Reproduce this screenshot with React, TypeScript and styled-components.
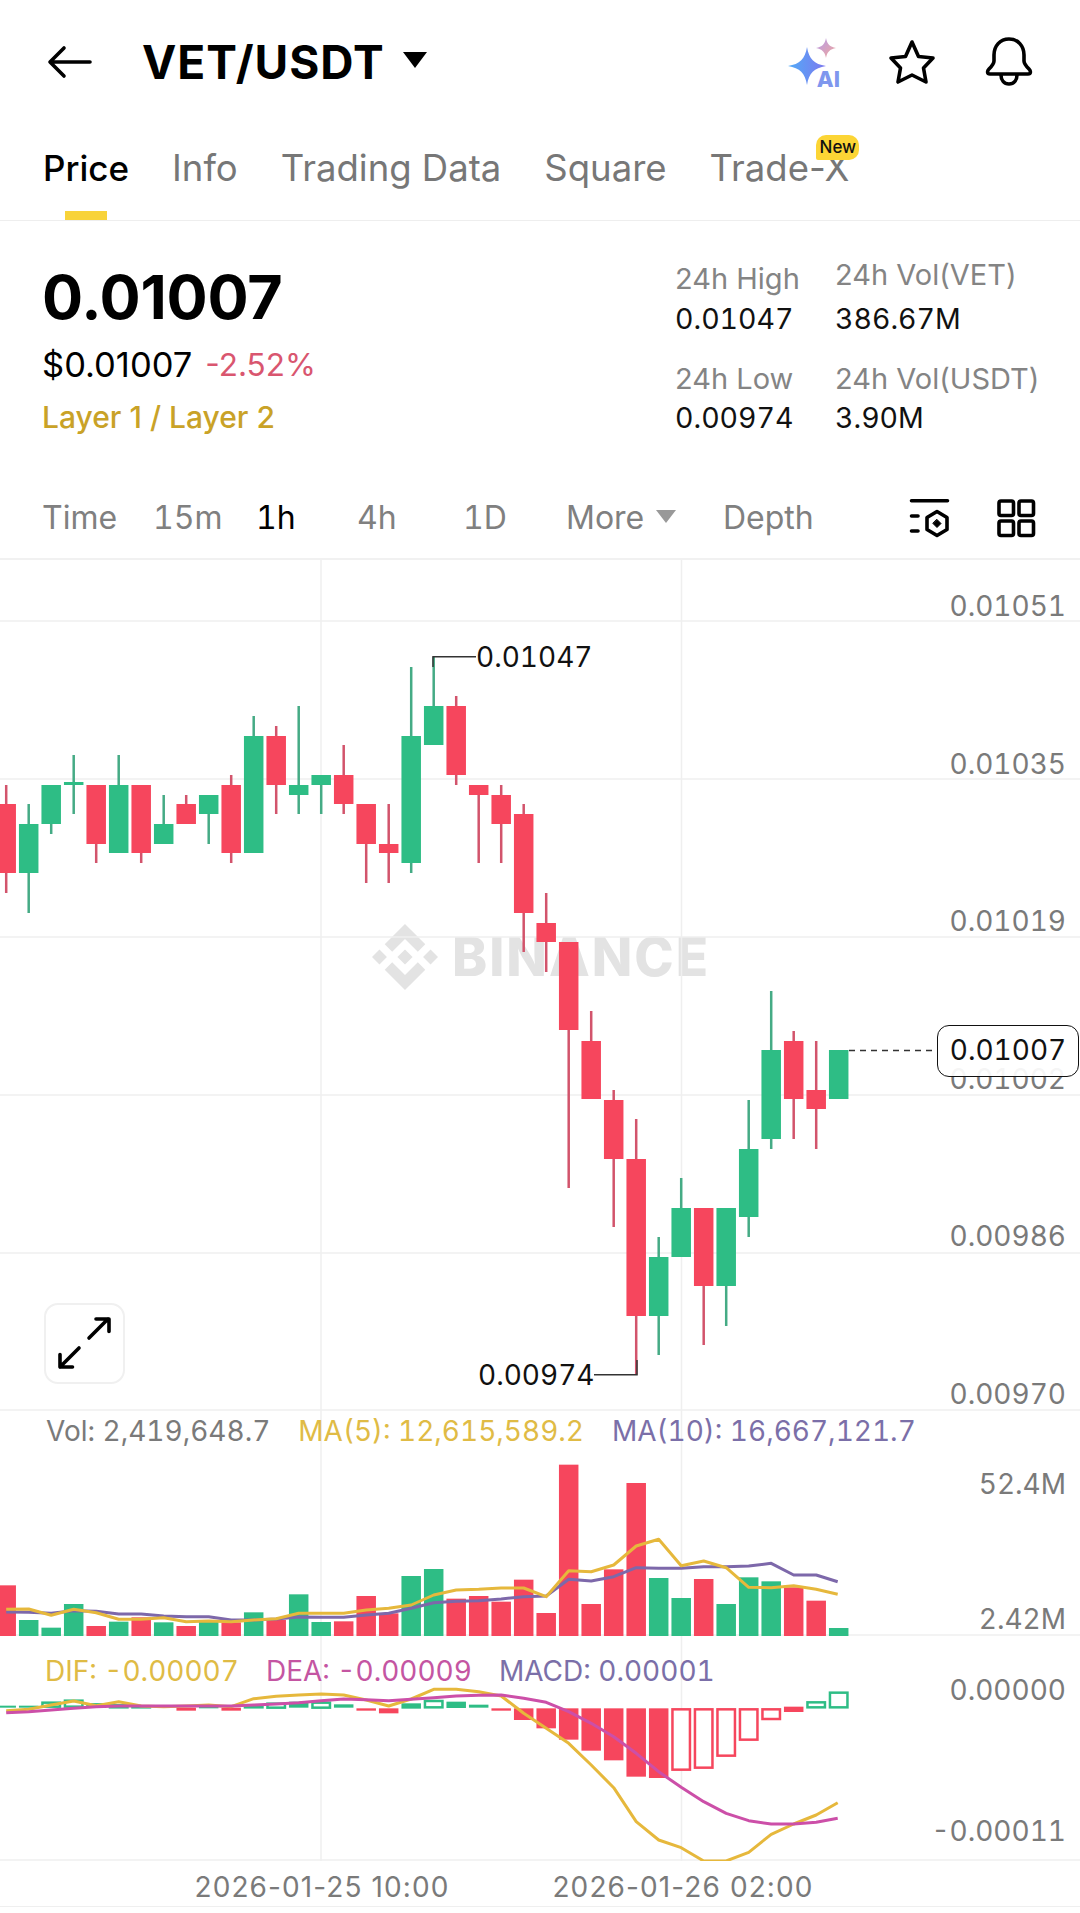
import * as React from 'react'
import styled, { createGlobalStyle } from 'styled-components'

const FONT = 'Inter, "Liberation Sans", sans-serif'
const GREEN = '#2ebd85'
const RED = '#f6465d'
const GRID = '#efefef'

const GlobalStyle = createGlobalStyle`
    html, body {
        margin: 0;
        padding: 0;
        background: #fff;
    }
    body {
        width: 1080px;
        height: 1913px;
        overflow: hidden;
        font-family: ${FONT};
        color: #000;
    }
`

const Page = styled.div`
    width: 1080px;
    height: 1913px;
    background: #fff;
`

const Header = styled.header`
    display: flex;
    align-items: center;
    height: 124px;
    padding: 0 47px 0 46px;
    box-sizing: border-box;
`

const Title = styled.h1`
    margin: 0 0 0 50px;
    font-size: 46px;
    line-height: 50px;
    font-weight: 700;
    letter-spacing: 1px;
`

const Caret = styled.span`
    width: 0;
    height: 0;
    margin-left: 18px;
    margin-bottom: 4px;
    border-left: 12px solid transparent;
    border-right: 12px solid transparent;
    border-top: 16px solid #000;
`

const HeaderIcons = styled.div`
    display: flex;
    align-items: center;
    gap: 49px;
    margin-left: auto;
`

const AiBox = styled.div`
    position: relative;
    width: 52px;
    height: 50px;
`

const AiText = styled.span`
    position: absolute;
    right: -1px;
    bottom: -2px;
    font-size: 22px;
    line-height: 20px;
    font-weight: 800;
    color: #7f97ee;
`

const Tabs = styled.nav`
    position: relative;
    display: flex;
    gap: 43px;
    height: 97px;
    padding: 24px 0 0 43px;
    box-sizing: border-box;
    border-bottom: 1px solid #eeeeee;
`

const Tab = styled.div<{ $active?: boolean }>`
    position: relative;
    height: 40px;
    font-size: ${p => (p.$active ? 35 : 36.5)}px;
    line-height: 40px;
    font-weight: ${p => (p.$active ? 500 : 400)};
    white-space: nowrap;
    color: ${p => (p.$active ? '#000' : '#777')};
`

const TabMark = styled.span`
    position: absolute;
    left: 22px;
    top: 63px;
    width: 42px;
    height: 9px;
    background: #f8d33a;
`

const NewBadge = styled.span`
    position: absolute;
    right: -10px;
    top: -13px;
    width: 43px;
    height: 25px;
    border-radius: 10px 10px 10px 2px;
    background: #fcd535;
    color: #111;
    font-size: 17px;
    line-height: 25px;
    font-weight: 500;
    text-align: center;
`

const Summary = styled.section`
    display: grid;
    grid-template-columns: 633px 160px 1fr;
    height: 249px;
    padding: 36px 0 0 42px;
    box-sizing: border-box;
`

const PriceBlock = styled.div`
    padding-top: 10px;
`

const BigPrice = styled.div`
    font-size: 61px;
    line-height: 60px;
    font-weight: 700;
    letter-spacing: -0.2px;
`

const ChangeRow = styled.div`
    display: flex;
    gap: 13px;
    margin-top: 20px;
    font-size: 34.5px;
    line-height: 36px;
    font-weight: 400;
`

const Change = styled.span`
    color: #d9566f;
    font-size: 31.5px;
`

const Sector = styled.div`
    margin-top: 16px;
    font-size: 30px;
    line-height: 36px;
    font-weight: 500;
    color: #c9a227;
`

const Stat = styled.div`
    margin-bottom: 24px;
`

const StatLabel = styled.div<{ $mt?: number }>`
    margin-top: ${p => p.$mt ?? 0}px;
    font-size: 29px;
    line-height: 36px;
    color: #848484;
    white-space: nowrap;
`

const StatValue = styled.div<{ $mt: number }>`
    margin-top: ${p => p.$mt}px;
    font-size: 28.5px;
    line-height: 36px;
    font-variant-numeric: tabular-nums;
    color: #111;
    white-space: nowrap;
`

const Intervals = styled.div`
    display: flex;
    align-items: center;
    height: 90px;
    padding: 8px 44px 0 42px;
    box-sizing: border-box;
    border-bottom: 2px solid #f1f1f1;
`

const Interval = styled.div<{ $w: number; $active?: boolean }>`
    display: flex;
    align-items: center;
    width: ${p => p.$w}px;
    flex: none;
    font-size: 32px;
    line-height: 40px;
    font-variant-numeric: tabular-nums;
    color: ${p => (p.$active ? '#000' : '#808080')};
`

const SmallCaret = styled.span`
    width: 0;
    height: 0;
    margin: 0 0 4px 12px;
    border-left: 10px solid transparent;
    border-right: 10px solid transparent;
    border-top: 13px solid #999;
`

const IntervalIcons = styled.div`
    display: flex;
    align-items: center;
    gap: 44px;
    margin-left: auto;
`

const Panel = styled.div<{ $h: number }>`
    position: relative;
    width: 1080px;
    height: ${p => p.$h}px;
    overflow: hidden;
`

const PanelSvg = styled.svg`
    position: relative;
    z-index: 1;
    display: block;
`

const Watermark = styled.div`
    position: absolute;
    left: 372px;
    top: 363px;
    display: flex;
    align-items: center;
    gap: 14px;
    height: 67px;
    color: #e3e3e3;
    font-size: 53px;
    font-weight: 800;
    letter-spacing: 2px;
`

const Axis = styled.div<{ $top: number; $bottom: number }>`
    position: absolute;
    z-index: 2;
    right: 14px;
    top: ${p => p.$top}px;
    bottom: ${p => p.$bottom}px;
    display: flex;
    flex-direction: column;
    justify-content: space-between;
    align-items: flex-end;
    font-size: 28px;
    line-height: 34px;
    font-variant-numeric: tabular-nums;
    color: #7a7a7a;
`

const Extreme = styled.div<{ $x: number; $y: number }>`
    position: absolute;
    z-index: 2;
    left: ${p => p.$x}px;
    top: ${p => p.$y}px;
    font-size: 28px;
    line-height: 34px;
    font-variant-numeric: tabular-nums;
    color: #111;
`

const PriceTag = styled.div`
    position: absolute;
    z-index: 3;
    left: 937px;
    top: 465px;
    width: 142px;
    height: 52px;
    box-sizing: border-box;
    border: 1.5px solid #111;
    border-radius: 12px;
    background: rgba(255, 255, 255, 0.92);
    font-size: 28px;
    line-height: 49px;
    font-variant-numeric: tabular-nums;
    text-align: center;
    color: #111;
`

const ExpandButton = styled.div`
    position: absolute;
    z-index: 2;
    left: 44px;
    top: 743px;
    width: 81px;
    height: 81px;
    box-sizing: border-box;
    border: 2px solid #f0f0f0;
    border-radius: 14px;
    background: #fff;
`

const Legend = styled.div<{ $top: number; $left: number; $gap: number }>`
    position: absolute;
    z-index: 2;
    left: ${p => p.$left}px;
    top: ${p => p.$top}px;
    display: flex;
    gap: ${p => p.$gap}px;
    font-size: 28px;
    line-height: 34px;
    font-variant-numeric: tabular-nums;
    white-space: nowrap;
`

const LegendItem = styled.span<{ $color: string }>`
    color: ${p => p.$color};
`

const TimeAxis = styled.div`
    position: relative;
    height: 45px;
    border-bottom: 1px solid ${GRID};
    box-sizing: content-box;
`

const TimeLabel = styled.span<{ $x: number }>`
    position: absolute;
    left: ${p => p.$x}px;
    top: 9px;
    transform: translateX(-50%);
    font-size: 28px;
    line-height: 34px;
    letter-spacing: 1.1px;
    color: #7a7a7a;
    white-space: nowrap;
`

// [up, body top, body bottom, wick top, wick bottom] in page pixels
const candles: [boolean, number, number, number, number][] = [
    [false, 804, 873, 785, 893], [true, 824, 873, 804, 913], [true, 785, 824, 785, 834], [true, 782, 785, 755, 814],
    [false, 785, 844, 785, 863], [true, 785, 853, 755, 853], [false, 785, 853, 785, 863], [true, 824, 844, 795, 844],
    [false, 804, 824, 795, 824], [true, 795, 814, 795, 844], [false, 785, 853, 775, 863], [true, 736, 853, 716, 853],
    [false, 736, 785, 726, 814], [true, 785, 795, 706, 814], [true, 775, 785, 775, 814], [false, 775, 804, 745, 814],
    [false, 804, 844, 804, 883], [false, 844, 853, 804, 883], [true, 736, 863, 667, 873], [true, 706, 745, 657, 745],
    [false, 706, 775, 696, 785], [false, 785, 795, 785, 863], [false, 795, 824, 785, 863], [false, 814, 913, 804, 952],
    [false, 923, 942, 893, 972], [false, 942, 1030, 942, 1188], [false, 1041, 1099, 1011, 1099], [false, 1100, 1159, 1090, 1227],
    [false, 1159, 1316, 1119, 1375], [true, 1257, 1316, 1237, 1355], [true, 1208, 1257, 1178, 1257], [false, 1208, 1286, 1208, 1345],
    [true, 1208, 1286, 1208, 1326], [true, 1149, 1217, 1100, 1237], [true, 1050, 1139, 991, 1149], [false, 1041, 1099, 1031, 1139],
    [false, 1090, 1109, 1041, 1149], [true, 1050, 1099, 1050, 1099],
]

// the series below were read off 3x crops starting at y=1400
const toY = (v: number) => 1400 + v / 3
const barX = (i: number) => 6.2 + i * 22.5

const volumeTops = [
    556, 660, 683, 612, 678, 665, 652, 667, 678, 662, 667, 637, 660, 583, 666, 664, 588, 640, 528,
    507, 596, 588, 605, 539, 639, 194, 612, 508, 249, 534, 594, 537, 612, 532, 544, 562, 602, 684,
]
const ma5 = [
    628, 627, 646, 628, 638, 658, 658, 653, 665, 663, 665, 660, 656, 640, 640, 640, 630, 625, 615,
    585, 570, 568, 564, 564, 590, 512, 515, 495, 438, 418, 497, 483, 503, 562, 563, 557, 568, 583,
]
const ma10 = [
    636, 637, 640, 632, 634, 642, 642, 648, 650, 650, 660, 660, 657, 651, 652, 652, 645, 640, 625,
    608, 604, 602, 597, 590, 588, 538, 543, 530, 503, 505, 505, 500, 500, 498, 490, 525, 525, 545,
]
const dif = [
    932, 928, 915, 903, 917, 905, 918, 920, 918, 915, 920, 896, 889, 885, 882, 885, 900, 918, 897,
    868, 868, 875, 888, 940, 985, 1030, 1095, 1163, 1265, 1320, 1343, 1383, 1383, 1357, 1303, 1272, 1245, 1208,
]
const dea = [
    938, 935, 930, 925, 920, 918, 918, 918, 918, 918, 918, 915, 912, 908, 902, 897, 899, 902, 898,
    893, 888, 886, 885, 895, 907, 935, 970, 1010, 1060, 1115, 1162, 1205, 1240, 1262, 1272, 1272, 1267, 1255,
]
// [top, bottom, colour, hollow]
const macdBars: [number, number, string, boolean][] = [
    [917, 923, GREEN, false], [917, 923, GREEN, false], [905, 923, GREEN, true], [899, 923, GREEN, true],
    [910, 923, GREEN, true], [913, 925, GREEN, true], [916, 925, GREEN, true], [918, 921, GREEN, false],
    [923, 932, RED, false], [915, 925, GREEN, false], [923, 932, RED, false], [913, 925, GREEN, true],
    [908, 926, GREEN, true], [905, 923, GREEN, false], [905, 926, GREEN, true], [913, 923, GREEN, false],
    [925, 932, RED, false], [925, 940, RED, false], [910, 926, GREEN, false], [900, 925, GREEN, true],
    [905, 924, GREEN, false], [914, 923, GREEN, false], [925, 932, RED, false], [925, 960, RED, false],
    [925, 985, RED, false], [925, 1019, RED, false], [925, 1052, RED, false], [925, 1081, RED, false],
    [925, 1130, RED, false], [925, 1134, RED, false], [925, 1112, RED, true], [925, 1106, RED, true],
    [925, 1070, RED, true], [925, 1022, RED, true], [925, 960, RED, true], [920, 936, RED, false],
    [904, 925, GREEN, true], [875, 925, GREEN, true],
]

const linePoints = (series: number[]) =>
    series.map((v, i) => `${(i === 37 ? barX(i) - 1 : barX(i)).toFixed(1)},${toY(v).toFixed(1)}`).join(' ')

const GridLines = ({ ys, top, bottom }: { ys: number[]; top: number; bottom: number }) => (
    <g stroke={GRID} strokeWidth="1.5">
        {ys.map(y => <line key={y} x1="0" x2="1080" y1={y} y2={y} />)}
        <line x1="321" x2="321" y1={top} y2={bottom} />
        <line x1="681.5" x2="681.5" y1={top} y2={bottom} />
    </g>
)

const BackIcon = () => (
    <svg width="46" height="34" viewBox="0 0 46 34" fill="none" stroke="#000" strokeWidth="3.6" strokeLinecap="round" strokeLinejoin="round">
        <path d="M44 17H5M18 3L4 17l14 14" />
    </svg>
)

const AiIcon = () => (
    <AiBox>
        <svg width="52" height="50" viewBox="0 0 52 50">
            <defs>
                <linearGradient id="bigStar" x1="0" y1="0.5" x2="1" y2="0.5">
                    <stop offset="0" stopColor="#52abf7" />
                    <stop offset="1" stopColor="#7d78ef" />
                </linearGradient>
                <linearGradient id="smallStar" x1="0" y1="0" x2="1" y2="1">
                    <stop offset="0" stopColor="#b49cec" />
                    <stop offset="1" stopColor="#f3a79a" />
                </linearGradient>
            </defs>
            <path d="M20 10C22 22 27 27 39 29C27 31 22 36 20 48C18 36 13 31 1 29C13 27 18 22 20 10Z" fill="url(#bigStar)" />
            <path d="M39 1C40 7 43 10 49 11C43 12 40 15 39 21C38 15 35 12 29 11C35 10 38 7 39 1Z" fill="url(#smallStar)" />
        </svg>
        <AiText>AI</AiText>
    </AiBox>
)

const StarIcon = () => (
    <svg width="48" height="48" viewBox="0 0 48 48" fill="none" stroke="#000" strokeWidth="3.6" strokeLinejoin="round">
        <path d="M24 4l6.5 14.5L45 20l-9.5 10L38 44l-14-7-14 7 2.500-14L3 20l14.500-1.500z" />
    </svg>
)

const BellIcon = () => (
    <svg width="48" height="50" viewBox="0 0 48 50" fill="none" stroke="#000" strokeWidth="3.6" strokeLinejoin="round">
        <path d="M24 2C15 2 9 9 9 18v6c0 3-2 5-5 8-2 2-2 5 1 5h38c3 0 3-3 1-5-3-3-5-5-5-8v-6C39 9 33 2 24 2z" />
        <path d="M16 38c0 5 3 9 8 9s8-4 8-9" />
    </svg>
)

const ChartTypeIcon = () => (
    <svg width="46" height="42" viewBox="0 0 46 42" fill="none" stroke="#000" strokeWidth="3.6" strokeLinecap="round" strokeLinejoin="round">
        <path d="M5.500 3.700h36M5.500 19H12M5.500 34H12" />
        <path d="M31 14.500l10 6v12l-10 6-10-6v-12z" />
        <path d="M31 22.500l4 4-4 4-4-4z" fill="#000" strokeWidth="1" />
    </svg>
)

const LayoutIcon = () => (
    <svg width="40" height="40" viewBox="0 0 40 40" fill="none" stroke="#000" strokeWidth="3.6">
        <rect x="3" y="3" width="14.500" height="14.500" rx="2" />
        <rect x="23" y="3" width="14.500" height="14.500" rx="2" />
        <rect x="3" y="23" width="14.500" height="14.500" rx="2" />
        <rect x="23" y="23" width="14.500" height="14.500" rx="2" />
    </svg>
)

const ExpandIcon = () => (
    <svg width="77" height="77" viewBox="0 0 77 77" fill="none" stroke="#000" strokeWidth="3.6" strokeLinecap="round" strokeLinejoin="round">
        <path d="M43 33l19-19M50 14h13v12.500" />
        <path d="M33 43L14 62M14 49.500V62h12.500" />
    </svg>
)

const BinanceMark = () => (
    <svg width="66" height="66" viewBox="0 0 126.61 126.61" fill="#e3e3e3">
        <path d="M38.73 53.200L63.300 28.630l24.580 24.580 14.300-14.300L63.300 0 24.430 38.880zM0 63.310l14.300-14.300 14.300 14.300-14.300 14.300zM38.730 73.410L63.300 97.980l24.580-24.580 14.300 14.300L63.300 126.600 24.430 87.730zM97.990 63.310l14.300-14.300 14.310 14.300-14.300 14.300zM77.830 63.300L63.300 48.760 48.780 63.280 63.300 77.810z" />
    </svg>
)

const PriceChart = () => (
    <Panel $h={851}>
        <Watermark>
            <BinanceMark />
            <span>BINANCE</span>
        </Watermark>
        <PanelSvg width="1080" height="851" viewBox="0 560 1080 851">
            <GridLines ys={[621, 779, 937, 1095, 1253, 1410]} top={560} bottom={1411} />
            {candles.map(([up, top, bottom, wickTop, wickBottom], i) => (
                <g key={i}>
                    <rect x={barX(i) - 1.25} y={wickTop} width="2.5" height={wickBottom - wickTop} fill={up ? '#45ab85' : '#d2546c'} />
                    <rect x={barX(i) - 9.75} y={top} width="19.5" height={bottom - top} fill={up ? GREEN : RED} />
                </g>
            ))}
            <path d="M433 667V656.700H476" fill="none" stroke="#333" strokeWidth="1.5" />
            <path d="M637 1360V1374.700H594" fill="none" stroke="#333" strokeWidth="1.5" />
            <path d="M849 1050.500H936" stroke="#333" strokeWidth="1.5" strokeDasharray="6 5" />
        </PanelSvg>
        <Axis $top={29} $bottom={0}>
            <span>0.01051</span>
            <span>0.01035</span>
            <span>0.01019</span>
            <span>0.01002</span>
            <span>0.00986</span>
            <span>0.00970</span>
        </Axis>
        <Extreme $x={476} $y={80}>0.01047</Extreme>
        <Extreme $x={478} $y={798}>0.00974</Extreme>
        <PriceTag>0.01007</PriceTag>
        <ExpandButton>
            <ExpandIcon />
        </ExpandButton>
    </Panel>
)

const VolumeChart = () => (
    <Panel $h={225}>
        <PanelSvg width="1080" height="225" viewBox="0 1411 1080 225">
            <GridLines ys={[1635]} top={1411} bottom={1636} />
            {volumeTops.map((v, i) => (
                <rect key={i} x={barX(i) - 9.75} y={toY(v)} width="19.5" height={1636 - toY(v)} fill={candles[i][0] ? GREEN : RED} />
            ))}
            <polyline points={linePoints(ma10)} fill="none" stroke="#7d68aa" strokeWidth="3" strokeLinejoin="round" />
            <polyline points={linePoints(ma5)} fill="none" stroke="#e6b83c" strokeWidth="3" strokeLinejoin="round" />
        </PanelSvg>
        <Legend $top={3} $left={46} $gap={28}>
            <LegendItem $color="#7a7a7a">Vol: 2,419,648.7</LegendItem>
            <LegendItem $color="#e0bb45">MA(5): 12,615,589.2</LegendItem>
            <LegendItem $color="#7b6fa8">MA(10): 16,667,121.7</LegendItem>
        </Legend>
        <Axis $top={56} $bottom={0}>
            <span>52.4M</span>
            <span>2.42M</span>
        </Axis>
    </Panel>
)

const MacdChart = () => (
    <Panel $h={225}>
        <PanelSvg width="1080" height="225" viewBox="0 1636 1080 225">
            <GridLines ys={[1860]} top={1636} bottom={1861} />
            {macdBars.map(([top, bottom, color, hollow], i) =>
                hollow ? (
                    <rect key={i} x={barX(i) - 8.75} y={toY(top) + 1} width="17.5" height={toY(bottom) - toY(top) - 2} fill="#fff" stroke={color} strokeWidth="2.5" />
                ) : (
                    <rect key={i} x={barX(i) - 9.75} y={toY(top)} width="19.5" height={toY(bottom) - toY(top)} fill={color} />
                )
            )}
            <polyline points={linePoints(dif)} fill="none" stroke="#e6b83c" strokeWidth="3" strokeLinejoin="round" />
            <polyline points={linePoints(dea)} fill="none" stroke="#cc4fa8" strokeWidth="3" strokeLinejoin="round" />
        </PanelSvg>
        <Legend $top={18} $left={45} $gap={27}>
            <LegendItem $color="#dfbb45">DIF: -0.00007</LegendItem>
            <LegendItem $color="#c455a2">DEA: -0.00009</LegendItem>
            <LegendItem $color="#7b6fa8">MACD: 0.00001</LegendItem>
        </Legend>
        <Axis $top={37} $bottom={13}>
            <span>0.00000</span>
            <span>-0.00011</span>
        </Axis>
    </Panel>
)

export default function App() {
    return (
        <Page>
            <GlobalStyle />
            <Header>
                <BackIcon />
                <Title>VET/USDT</Title>
                <Caret />
                <HeaderIcons>
                    <AiIcon />
                    <StarIcon />
                    <BellIcon />
                </HeaderIcons>
            </Header>
            <Tabs>
                <Tab $active>Price<TabMark /></Tab>
                <Tab>Info</Tab>
                <Tab>Trading Data</Tab>
                <Tab>Square</Tab>
                <Tab>Trade-X<NewBadge>New</NewBadge></Tab>
            </Tabs>
            <Summary>
                <PriceBlock>
                    <BigPrice>0.01007</BigPrice>
                    <ChangeRow>
                        <span>$0.01007</span>
                        <Change>-2.52%</Change>
                    </ChangeRow>
                    <Sector>Layer 1 / Layer 2</Sector>
                </PriceBlock>
                <div>
                    <Stat>
                        <StatLabel $mt={4}>24h High</StatLabel>
                        <StatValue $mt={4}>0.01047</StatValue>
                    </Stat>
                    <Stat>
                        <StatLabel>24h Low</StatLabel>
                        <StatValue $mt={3}>0.00974</StatValue>
                    </Stat>
                </div>
                <div>
                    <Stat>
                        <StatLabel>24h Vol(VET)</StatLabel>
                        <StatValue $mt={8}>386.67M</StatValue>
                    </Stat>
                    <Stat>
                        <StatLabel>24h Vol(USDT)</StatLabel>
                        <StatValue $mt={3}>3.90M</StatValue>
                    </Stat>
                </div>
            </Summary>
            <Intervals>
                <Interval $w={111}>Time</Interval>
                <Interval $w={103}>15m</Interval>
                <Interval $w={101} $active>1h</Interval>
                <Interval $w={106}>4h</Interval>
                <Interval $w={103}>1D</Interval>
                <Interval $w={157}>More<SmallCaret /></Interval>
                <Interval $w={100}>Depth</Interval>
                <IntervalIcons>
                    <ChartTypeIcon />
                    <LayoutIcon />
                </IntervalIcons>
            </Intervals>
            <PriceChart />
            <VolumeChart />
            <MacdChart />
            <TimeAxis>
                <TimeLabel $x={322}>2026-01-25 10:00</TimeLabel>
                <TimeLabel $x={683}>2026-01-26 02:00</TimeLabel>
            </TimeAxis>
        </Page>
    )
}
